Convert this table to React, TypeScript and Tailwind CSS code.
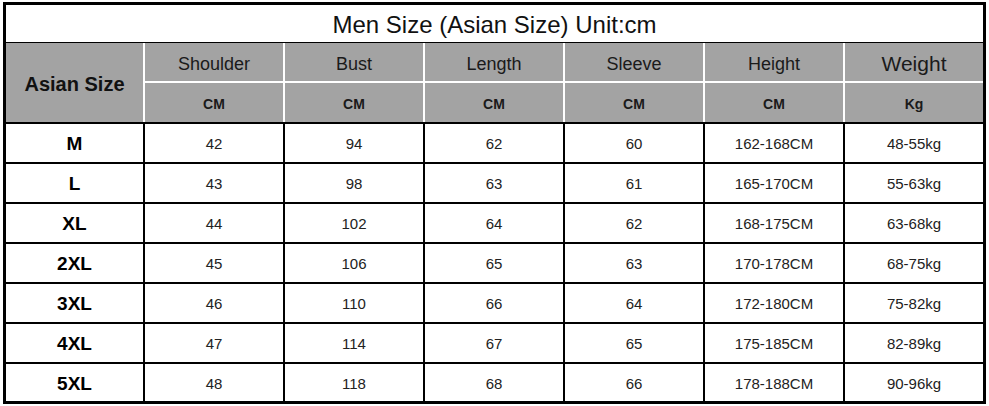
import React from "react";

const cols = ["Shoulder", "Bust", "Length", "Sleeve", "Height", "Weight"];
const units = ["CM", "CM", "CM", "CM", "CM", "Kg"];
const rows: string[][] = [
  ["M", "42", "94", "62", "60", "162-168CM", "48-55kg"],
  ["L", "43", "98", "63", "61", "165-170CM", "55-63kg"],
  ["XL", "44", "102", "64", "62", "168-175CM", "63-68kg"],
  ["2XL", "45", "106", "65", "63", "170-178CM", "68-75kg"],
  ["3XL", "46", "110", "66", "64", "172-180CM", "75-82kg"],
  ["4XL", "47", "114", "67", "65", "175-185CM", "82-89kg"],
  ["5XL", "48", "118", "68", "66", "178-188CM", "90-96kg"],
];

export default function App() {
  return (
    <div
      className="w-[989px] h-[406px] bg-white pl-[3px] pt-[2px] overflow-hidden"
      style={{ fontFamily: '"Liberation Sans", Arial, sans-serif' }}
    >
      <div className="w-[983px] border-[3px] border-black">
        <div className="h-[38px] flex items-center justify-center pt-[2px] text-[24px] text-[#111] border-b border-black">
          Men Size (Asian Size) Unit:cm
        </div>
        <div className="grid grid-cols-[137px_repeat(6,138px)] grid-rows-[38px_39px] gap-[2px] bg-white">
          <div className="row-span-2 bg-[#a3a3a3] flex items-center justify-center pt-[2px] text-[20px] font-bold text-[#111]">
            Asian Size
          </div>
          {cols.map((c) => (
            <div
              key={c}
              className={
                "bg-[#a3a3a3] flex items-center justify-center pt-[4px] text-[#1a1a1a] " +
                (c === "Weight" ? "text-[21px]" : "text-[18px]")
              }
            >
              {c}
            </div>
          ))}
          {units.map((u, i) => (
            <div
              key={i}
              className="bg-[#a3a3a3] flex items-center justify-center pt-[3px] text-[14px] font-bold text-[#1a1a1a]"
            >
              {u}
            </div>
          ))}
        </div>
        <div className="grid grid-cols-[137px_repeat(6,138px)] grid-rows-[repeat(6,38px)_37px] gap-[2px] bg-black border-t-2 border-black">
          {rows.map((r) =>
            r.map((v, j) => (
              <div
                key={r[0] + j}
                className={
                  "bg-white flex items-center justify-center pt-[3px] " +
                  (j === 0 ? "text-[19px] font-bold text-black" : "text-[15px] text-[#222]")
                }
              >
                {v}
              </div>
            ))
          )}
        </div>
      </div>
    </div>
  );
}
